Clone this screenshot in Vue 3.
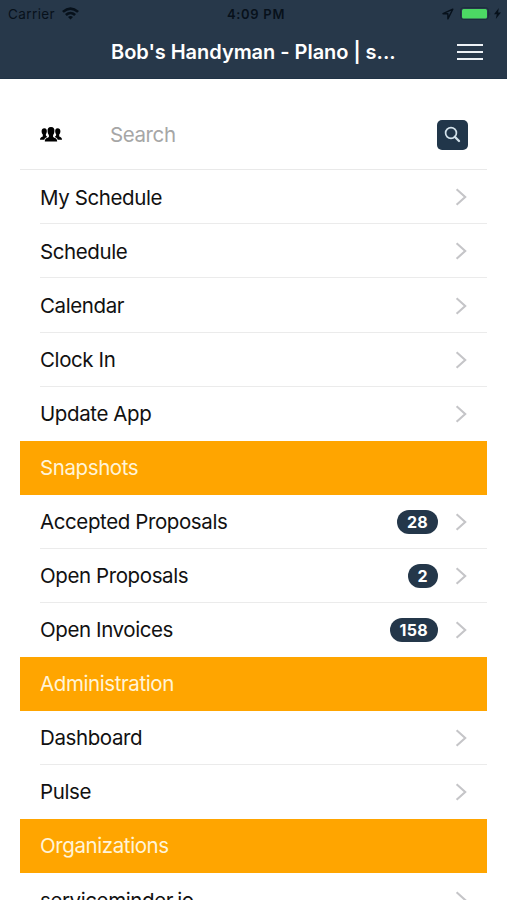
<template>
  <div class="screen">
    <header class="top">
      <div class="status">
        <div class="carrier">
          <span class="carrier-name">Carrier</span>
          <svg width="17" height="13" viewBox="0 0 17 13">
            <path d="M0 3.9Q8.5-3.5 17 3.9L15.2 5.8Q8.5 0 1.8 5.8ZM3 7Q8.5 2.3 14 7L12.2 8.9Q8.5 5.8 4.8 8.9ZM6 10Q8.5 8 11 10L8.5 12.5Z" />
          </svg>
        </div>
        <span class="time">4:09 PM</span>
        <div class="power">
          <svg width="12" height="12" viewBox="0 0 12 12">
            <path d="M10.8 1.1L1 5.7H5.9V10.9Z" fill="none" stroke="#07111b" stroke-width="1.4" stroke-linejoin="round" />
          </svg>
          <svg class="battery" width="31" height="14" viewBox="0 0 31 14">
            <rect x="0.5" y="0.5" width="28" height="12" rx="3" fill="none" stroke="#1c2d3c" />
            <rect x="2" y="2" width="25" height="9.5" rx="1.5" fill="#4cd964" />
            <path d="M29.5 4.5Q31 6.5 29.5 8.5Z" fill="#1c2d3c" />
          </svg>
          <svg class="bolt" width="7" height="11" viewBox="0 0 7 11">
            <path d="M4.8 0L0 6.2H2.8L1.8 11L7 4.5H4.1Z" />
          </svg>
        </div>
      </div>
      <div class="nav">
        <h1 class="title">Bob's Handyman - Plano | s...</h1>
        <button class="menu"><i></i><i></i><i></i></button>
      </div>
    </header>

    <main class="content">
      <div class="search">
        <svg class="people" width="22" height="15" viewBox="0 0 22 15">
          <path d="M4.3 1.3C6.3 1.3 7 2.8 6.8 4.6C6.7 6.3 6.2 6.9 5.8 7.5C5.8 8.8 6.7 9.6 7.3 10C5.6 10.7 4.7 11 4.3 12.8H0C0 10.3 1 10.4 2.8 9.4V7.5C1.9 6.7 1.6 5.5 1.6 4.1C1.6 2.5 2.7 1.3 4.3 1.3Z" />
          <path d="M17.7 1.3C15.7 1.3 15 2.8 15.2 4.6C15.3 6.3 15.8 6.9 16.2 7.5C16.2 8.8 15.3 9.6 14.7 10C16.4 10.7 17.3 11 17.7 12.8H22C22 10.3 21 10.4 19.2 9.4V7.5C20.1 6.7 20.4 5.5 20.4 4.1C20.4 2.5 19.3 1.3 17.7 1.3Z" />
          <path d="M11 0C13.8 0 14.6 1.8 14.4 4.2C14.2 6.3 13.6 7.3 13.1 7.9V10C14.5 11 17.2 11 17.2 14.6H4.8C4.8 11 7.5 11 8.9 10V7.9C8.4 7.3 7.8 6.3 7.6 4.2C7.4 1.8 8.2 0 11 0Z" />
        </svg>
        <input v-model="query" class="field" placeholder="Search" />
        <button class="go">
          <svg width="17" height="17" viewBox="0 0 17 17" fill="none" stroke="#d3e2eb">
            <circle cx="7" cy="7" r="5.4" stroke-width="1.7" />
            <path d="M10.8 10.8L15 15" stroke-width="2.3" stroke-linecap="round" />
          </svg>
        </button>
      </div>

      <div v-for="row in rows" :key="row.label" :class="row.section ? 'section' : 'row'">
        <span class="label">{{ row.label }}</span>
        <template v-if="!row.section">
          <span v-if="row.count" class="badge">{{ row.count }}</span>
          <svg class="chevron" width="12" height="18" viewBox="0 0 12 18">
            <path d="M1.6 1.3L10.2 9L1.6 16.7" fill="none" stroke="#c5c5c8" stroke-width="2.1" />
          </svg>
        </template>
      </div>
    </main>
  </div>
</template>

<script setup>
import { ref } from "vue";

const query = ref("");

const rows = [
  { label: "My Schedule" },
  { label: "Schedule" },
  { label: "Calendar" },
  { label: "Clock In" },
  { label: "Update App" },
  { label: "Snapshots", section: true },
  { label: "Accepted Proposals", count: 28 },
  { label: "Open Proposals", count: 2 },
  { label: "Open Invoices", count: 158 },
  { label: "Administration", section: true },
  { label: "Dashboard" },
  { label: "Pulse" },
  { label: "Organizations", section: true },
  { label: "serviceminder.io" }
];
</script>

<style>
body { overflow: hidden; background: #fff; }
</style>

<style scoped>
* { box-sizing: border-box; }
.screen { height: 900px; overflow: hidden; font-family: Inter, "Liberation Sans", sans-serif; color: #111; background: #fff; }
svg { display: block; flex: none; }
button { border: 0; padding: 0; }

.top { height: 79px; background: #27384a; border-bottom: 1px solid #203346; }
.status { display: grid; grid-template-columns: 1fr auto 1fr; align-items: center; height: 27px; padding: 0 6px 0 8px; color: #07111b; font-size: 13px; }
.carrier { display: flex; align-items: center; gap: 7px; }
.carrier svg, .bolt { fill: #07111b; }
.carrier-name { font-size: 13.5px; letter-spacing: 0.4px; }
.time { padding-left: 3px; font-weight: 600; letter-spacing: 0.7px; }
.power { display: flex; justify-content: flex-end; align-items: center; }
.battery { margin-left: 6px; }
.bolt { margin-left: 3px; }
.nav { display: flex; align-items: center; height: 50px; padding: 0 24px 0 111px; }
.title { flex: 1; margin: 0; font-size: 20px; font-weight: 600; letter-spacing: -0.03px; color: #fff; white-space: nowrap; }
.menu { display: flex; flex-direction: column; gap: 5px; width: 26px; background: none; }
.menu i { height: 2px; background: #eef2f6; }

.content { padding: 21px 20px 0; }
.search { display: flex; align-items: center; height: 70.4px; padding: 0 19px 0 20px; border-bottom: 1px solid #e9e9e9; }
.field { flex: 1; min-width: 0; margin-left: 48px; padding: 0; border: 0; outline: 0; font: 20.5px Inter, sans-serif; letter-spacing: -0.4px; background: none; }
.field::placeholder { color: #a6a6a6; }
.go { display: flex; align-items: center; justify-content: center; width: 31px; height: 30px; border-radius: 5px; background: #21364a; }

.row, .section { display: flex; align-items: center; height: 54.06px; padding: 0 20px; font-size: 20.5px; letter-spacing: -0.4px; }
.row { position: relative; }
.row:not(:has(+ .section))::after { content: ""; position: absolute; left: 20px; right: 0; bottom: 0; height: 1px; background: #ebebeb; }
.section { background: #ffa500; color: #fff4d8; }
.label { flex: 1; white-space: nowrap; }
.badge { height: 24px; margin-right: 17px; padding: 0 10px; border-radius: 12px; background: #24374a; color: #fff; font-size: 16px; font-weight: 700; line-height: 24px; letter-spacing: 0.3px; }
</style>
